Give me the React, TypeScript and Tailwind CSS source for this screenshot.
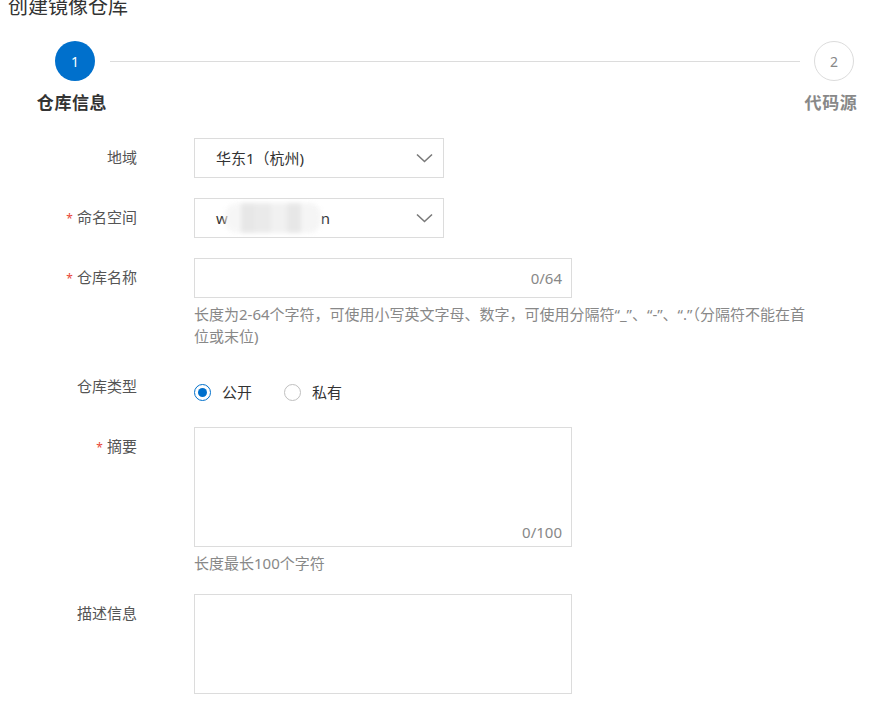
const font = "font-['Noto_Sans','Noto_Sans_CJK_SC',sans-serif]";

function Chevron() {
  return (
    <svg width="17" height="10" viewBox="0 0 17 10" fill="none" className="shrink-0">
      <path d="M1 1.5 L8.5 8.5 L16 1.5" stroke="#7a7a7a" strokeWidth="1.6" />
    </svg>
  );
}

function Label({ text, required }: { text: string; required?: boolean }) {
  return (
    <div className="w-[137px] shrink-0 pt-[9px] text-right text-[15px] leading-[20px] text-[#555]">
      {required && <span className="mr-[4px] text-[12px] text-[#e84738]">*</span>}
      {text}
    </div>
  );
}

function Radio({ checked, label }: { checked?: boolean; label: string }) {
  return (
    <label className="flex items-center gap-[11px]">
      <span
        className={
          checked
            ? "flex h-[17px] w-[17px] items-center justify-center rounded-full border border-[#0070cc] bg-white"
            : "flex h-[17px] w-[17px] items-center justify-center rounded-full border border-[#bfbfbf] bg-white"
        }
      >
        {checked && <span className="h-[9px] w-[9px] rounded-full bg-[#0070cc]" />}
      </span>
      <span className="text-[15px] text-[#333]">{label}</span>
    </label>
  );
}

export default function App() {
  return (
    <div className={`${font} min-h-[702px] w-[885px] overflow-hidden bg-white text-[#333]`}>
      <h1 className="-mt-[7px] pl-[8px] text-[20px] leading-[28px] font-normal text-[#333]">创建镜像仓库</h1>

      {/* steps */}
      <div className="mt-[20px] flex items-start pl-[55px] pr-[31px]">
        <div className="flex w-[40px] flex-col items-center">
          <div className="flex h-[40px] w-[40px] items-center justify-center rounded-full bg-[#0070cc] text-[14px] text-white">
            1
          </div>
          <div className="mr-[6px] mt-[13px] whitespace-nowrap text-[17px] leading-[17px] tracking-[0.6px] font-bold text-[#333]">
            仓库信息
          </div>
        </div>
        <div className="ml-[15px] mr-[14px] mt-[20px] h-px flex-1 bg-[#dcdcdc]" />
        <div className="flex w-[40px] flex-col items-center">
          <div className="flex h-[40px] w-[40px] items-center justify-center rounded-full border border-[#dcdcdc] bg-white text-[14px] text-[#888]">
            2
          </div>
          <div className="mr-[6px] mt-[13px] whitespace-nowrap text-[17px] leading-[17px] tracking-[0.6px] font-bold text-[#888]">
            代码源
          </div>
        </div>
      </div>

      {/* form */}
      <div className="mt-[27px] flex flex-col gap-[20px]">
        <div className="flex">
          <Label text="地域" />
          <div className="ml-[57px] flex h-[40px] w-[250px] items-center justify-between border border-[#dcdcdc] pl-[21px] pr-[10px] text-[15px] text-[#333]">
            <span>华东1（杭州)</span>
            <Chevron />
          </div>
        </div>

        <div className="flex">
          <Label text="命名空间" required />
          <div className="ml-[57px] flex h-[40px] w-[250px] items-center justify-between border border-[#dcdcdc] pl-[21px] pr-[10px] text-[15px] text-[#333]">
            <span className="flex items-center">
              w
              <span className="-ml-[3px] flex h-[30px] w-[96px] overflow-hidden rounded-[12px] opacity-80 blur-[2px]">
                <span className="w-[16px] bg-[#f5f5f5]" />
                <span className="w-[14px] bg-[#e2e2e2]" />
                <span className="w-[16px] bg-[#e6e6e6]" />
                <span className="w-[16px] bg-[#eeeeee]" />
                <span className="w-[14px] bg-[#e2e2e2]" />
                <span className="w-[20px] bg-[#f3f3f3]" />
              </span>
              n
            </span>
            <Chevron />
          </div>
        </div>

        <div className="flex">
          <Label text="仓库名称" required />
          <div className="ml-[57px] flex flex-col">
            <div className="flex h-[40px] w-[378px] items-center justify-end border border-[#dcdcdc] pr-[9px] text-[15px] text-[#888]">
              0/64
            </div>
            <p className="mt-[5px] w-[618px] text-[15px] leading-[22px] text-[#888]">
              长度为2-64个字符，可使用小写英文字母、数字，可使用分隔符“_”、“-”、“.”（分隔符不能在首位或末位)
            </p>
          </div>
        </div>

        <div className="flex h-[40px]">
          <Label text="仓库类型" />
          <div className="ml-[57px] flex items-start gap-[32px] pt-[14px]">
            <Radio checked label="公开" />
            <Radio label="私有" />
          </div>
        </div>

        <div className="flex">
          <Label text="摘要" required />
          <div className="ml-[57px] flex flex-col">
            <div className="flex h-[120px] w-[378px] items-end justify-end border border-[#dcdcdc] pb-[3px] pr-[9px] text-[15px] text-[#888]">
              0/100
            </div>
            <p className="mt-[5px] text-[15px] leading-[22px] text-[#888]">长度最长100个字符</p>
          </div>
        </div>

        <div className="flex">
          <Label text="描述信息" />
          <div className="ml-[57px] h-[100px] w-[378px] border border-[#dcdcdc]" />
        </div>
      </div>
    </div>
  );
}
